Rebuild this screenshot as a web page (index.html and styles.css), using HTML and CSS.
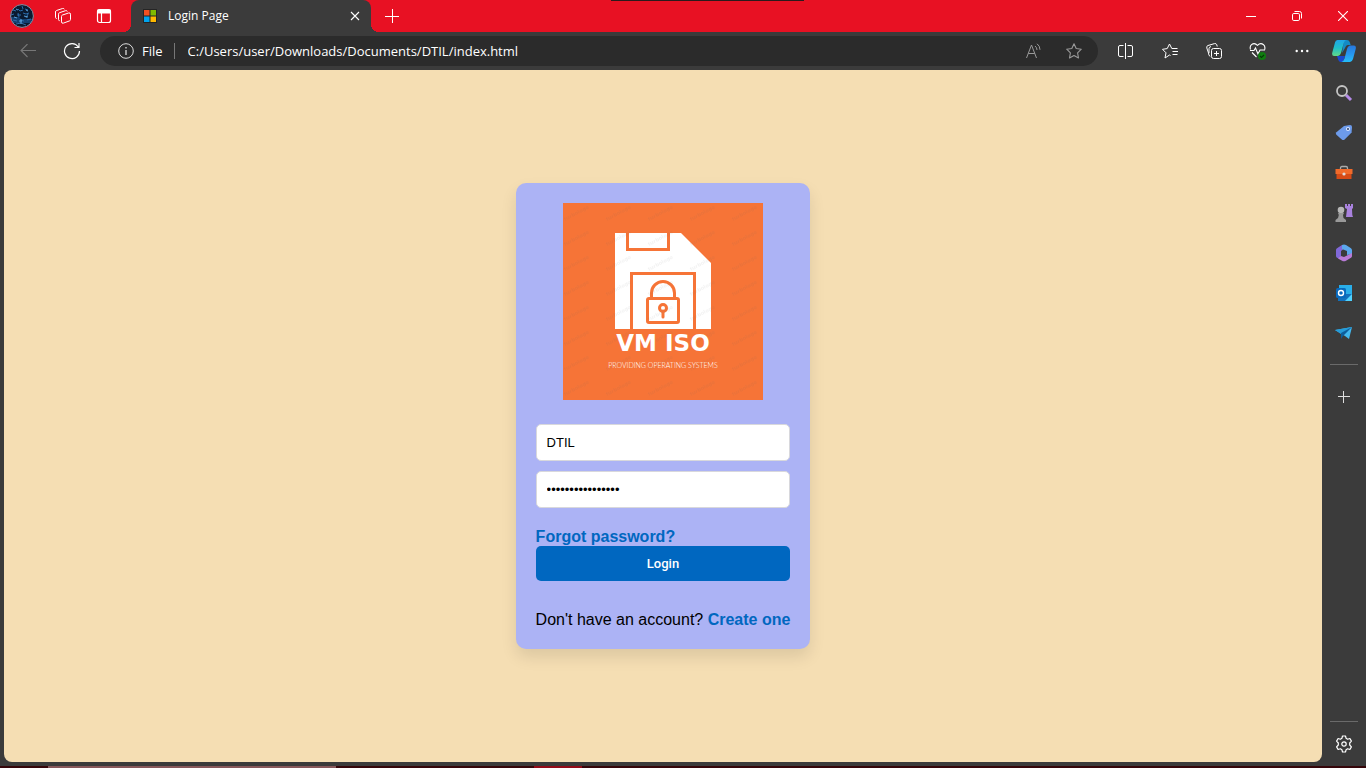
FILE: index.html
```html
<!DOCTYPE html>
<html lang="en">
<head>
<meta charset="utf-8">
<meta name="viewport" content="width=device-width, initial-scale=1">
<title>Login Page</title>
<link rel="stylesheet" href="styles.css">
</head>
<body>
<header class="titlebar">
  <div class="peek"></div>
  <button class="tool" aria-label="Profile">
    <svg width="24" height="24" viewBox="0 0 24 24">
      <defs><clipPath id="face"><circle cx="12" cy="12" r="11.5"/></clipPath></defs>
      <g clip-path="url(#face)">
        <path fill="#0a1a30" d="M0 0h24v24H0z"/>
        <path fill="#123f70" d="M0 13h9l2 2h13v4H0z"/>
        <path d="M3 6l3 1M8 5l2 2 3-1M15 5l3 1M1 11l3-1M7 11l4 0M13 9l3 1 3-1M3 16l4 1M10 16l4 1M17 16l4-1M6 20l5-1 5 2M12 2l1 3M18 10l-2 4M8 9l1 4" stroke="#2b6cab" fill="none"/>
        <path d="M11 15v5M9 17h3M14 12l4 1M4 13l3 1M16 6l2 1M6 5l2 1" stroke="#5ba2d8" fill="none"/>
      </g>
      <circle cx="12" cy="12" r="11.4" fill="none" stroke="#8f8fa3" stroke-width="1"/>
    </svg>
  </button>
  <button class="tool" aria-label="Workspaces">
    <svg width="18" height="18" viewBox="0 0 18 18" fill="none" stroke="#fff" stroke-linejoin="round">
      <path d="M8.500 8 14.500 6q2-.6 2 1.200v5.300q0 1-1 1.400l-6 2.200q-2 .6-2-1.200V9.500q0-1.200 1-1.500z"/>
      <path d="M5.700 13.700q-1.200 0-1.200-1.200V7.200q0-1.200 1-1.500l6-2q1.500-.4 1.800.8M2.700 11.500q-1.200 0-1.200-1.200V5q0-1.200 1-1.500l6-2q1.500-.4 1.800.8"/>
    </svg>
  </button>
  <button class="tool" aria-label="Tab actions">
    <svg width="16" height="16" viewBox="0 0 16 16" fill="none" stroke="#fff" stroke-width="1.200">
      <rect x="1.500" y="1.500" width="13" height="13" rx="2"/><path d="M2 2h12v3H2z" fill="#fff"/><path d="M5.500 5v9"/>
    </svg>
  </button>
  <div class="tab">
    <svg width="14" height="14" viewBox="0 0 14 14"><path fill="#252525" d="M0 0h14v14H0z"/><path fill="#f25022" d="M1 1h5.500v5.500H1z"/><path fill="#7fba00" d="M7.500 1H13v5.500H7.500z"/><path fill="#00a4ef" d="M1 7.500h5.500V13H1z"/><path fill="#ffb900" d="M7.500 7.500H13V13H7.500z"/></svg>
    <span class="tab-title">Login Page</span>
    <button class="tab-close" aria-label="Close tab"><svg width="10" height="10" viewBox="0 0 10 10" stroke="#fff" stroke-width="1.100"><path d="M1 1l8 8M9 1 1 9"/></svg></button>
  </div>
  <button class="tool" aria-label="New tab"><svg width="14" height="14" viewBox="0 0 14 14" stroke="#fff"><path d="M7.500 0v14M0 7.500h14"/></svg></button>
  <div class="window-buttons">
    <button aria-label="Minimize"><svg width="10" height="10" viewBox="0 0 10 10" stroke="#fff"><path d="M0 5.500h10"/></svg></button>
    <button aria-label="Restore"><svg width="10" height="10" viewBox="0 0 10 10" fill="none" stroke="#fff"><rect x=".5" y="2.500" width="7" height="7" rx="1.300"/><path d="M2.500.5h5q2 0 2 2v5"/></svg></button>
    <button aria-label="Close"><svg width="10" height="10" viewBox="0 0 10 10" stroke="#fff" stroke-width="1.100"><path d="M0 0l10 10M10 0 0 10"/></svg></button>
  </div>
</header>

<nav class="toolbar">
  <button class="tool" aria-label="Back" disabled><svg width="16" height="14" viewBox="0 0 16 14" fill="none" stroke="#777" stroke-width="1.100"><path d="M16 6.500H1M7.500 0 1 6.500 7.500 13"/></svg></button>
  <button class="tool" aria-label="Refresh"><svg width="18" height="18" viewBox="0 0 18 18" fill="none" stroke="#fff" stroke-width="1.200"><path d="M15.300 5A7.500 7.500 0 1 0 16.500 9M16 1v4.500h-4.500"/></svg></button>
  <div class="address">
    <button class="site-info"><svg width="16" height="16" viewBox="0 0 16 16" fill="none" stroke="#ddd"><circle cx="8" cy="8" r="7.300"/><path d="M8 7v5M8 4v1.500" stroke-width="1.300"/></svg>File</button>
    <input class="url" type="text" aria-label="Address" value="C:/Users/user/Downloads/Documents/DTIL/index.html">
    <button class="address-tool" aria-label="Read aloud"><svg width="16" height="16" viewBox="0 0 16 16" fill="none" stroke="#999"><path d="M.5 15 5.500 2l5 13M2.300 10.500h6.500M9 3q2 1.500 2 4M11 .8q3 2 3 6"/></svg></button>
    <button class="address-tool" aria-label="Add to favorites"><svg width="16" height="16" viewBox="0 0 16 16" fill="none" stroke="#999" stroke-width="1.100" stroke-linejoin="round"><path d="M8 .8 10.200 5.500l5.100.7-3.700 3.600.9 5.200L8 12.500 3.500 15l.9-5.200L.7 6.200l5.100-.7z"/></svg></button>
  </div>
  <div class="toolset">
    <button class="tool" aria-label="Split screen"><svg width="16" height="16" viewBox="0 0 16 16" fill="none" stroke="#fff"><path d="M7.500 0v16M5.500 2.500H2q-1.500 0-1.500 1.500v8q0 1.500 1.500 1.500h3.500M9.500 2.500H13q1.500 0 1.500 1.500v8q0 1.500-1.500 1.500H9.500"/></svg></button>
    <button class="tool" aria-label="Favorites"><svg width="16" height="16" viewBox="0 0 16 16" fill="none" stroke="#fff" stroke-linejoin="round"><path d="M8.500 12.500 7.500 12 3 15l1-5.200L.5 6.300l4.700-.7L7.500 1l2.300 4.500H15.500M10.500 8.500h5.500M10.500 11.500h5"/></svg></button>
    <button class="tool" aria-label="Collections"><svg width="16" height="16" viewBox="0 0 16 16" fill="none" stroke="#fff"><rect x="5.500" y="5.500" width="10" height="10" rx="2"/><path d="M10.500 8v5M8 10.500h5M4 13.500Q2.500 12 2.500 10L.8 5Q.3 3 2 2.500L8.500.6q1.700-.4 2.300 1.200l.4 1.700M5 3.500q-2 .5-2 2V10"/></svg></button>
    <button class="tool" aria-label="Browser essentials"><svg width="18" height="18" viewBox="0 0 18 18" fill="none" stroke="#fff" stroke-width="1.100"><path d="M1.500 7.500Q.5 4.500 2.500 2.700q3-2.500 6 .6 3-3 6-.6 2 1.800 1.200 4.800M1 8.500h4L6.500 6l2.500 6 2-4h5M3 10.500l4.500 4.500"/><circle cx="13" cy="14" r="4" fill="#107c10" stroke="none"/><path d="m11 14 1.500 1.500L15 13" stroke="#053a05"/></svg></button>
    <button class="tool" aria-label="Settings and more"><svg width="14" height="14" viewBox="0 0 14 14" fill="#fff"><circle cx="1.700" cy="7" r="1.200"/><circle cx="7" cy="7" r="1.200"/><circle cx="12.300" cy="7" r="1.200"/></svg></button>
  </div>
  <button class="copilot" aria-label="Copilot">
    <svg width="24" height="24" viewBox="0 0 24 24">
      <defs>
        <linearGradient id="cp1" x2="0" y2="1"><stop stop-color="#20a5e8"/><stop offset=".5" stop-color="#20bfc9"/><stop offset="1" stop-color="#62d987"/></linearGradient>
        <linearGradient id="cp2" x2="0" y2="1"><stop stop-color="#2777dc"/><stop offset=".5" stop-color="#2795ee"/><stop offset="1" stop-color="#25bdf8"/></linearGradient>
      </defs>
      <path fill="#148ac6" d="M12 1h3q2 0 2.700 2l1 3h-3Q14 6 13 9l-3 5z"/>
      <path fill="#1a49d0" d="M5 17h8l-2 6H9q-2 0-2.700-2z"/>
      <path fill="url(#cp1)" d="M5.500 1H14q-1.500.5-2.200 3L9 14q-1 3-3 3H2q-2.500 0-1.700-3.500L3 3.500Q3.500 1 5.500 1z"/>
      <path fill="url(#cp2)" d="M18.500 6.500H22q2.500 0 1.700 3.500L21 20q-1 3-3 3H9.500q2-.5 3-3.500L15 10q1-3.500 3.500-3.500z"/>
    </svg>
  </button>
</nav>

<div class="workspace">
  <main class="page">
    <form class="card">
      <svg class="logo" width="200" height="197" viewBox="0 0 200 197" role="img" aria-label="VM ISO">
        <defs>
          <pattern id="marks" width="42" height="25" patternUnits="userSpaceOnUse">
            <text class="mark" x="2" y="18" transform="rotate(-28 2 18)">turbologo</text>
          </pattern>
        </defs>
        <path fill="#f67437" d="M0 0h200v197H0z"/>
        <path fill="#fff" d="M52 30h66l30 30v66H52z"/>
        <g fill="none" stroke="#f67437" stroke-width="3">
          <path d="M64.500 30v16.500h41V30M68.500 126V70.500h63V126"/>
          <rect x="84.500" y="95.500" width="31" height="24" rx="1.500"/>
          <path d="M88.500 95V90a11.500 11.500 0 0 1 23 0v5"/>
          <circle cx="100" cy="105" r="3.500"/><path d="M100 108v6" stroke-linecap="round"/>
        </g>
        <path fill="url(#marks)" d="M0 0h200v197H0z"/>
        <text class="logo-name" x="100" y="148">VM ISO</text>
        <text class="logo-tagline" x="100" y="165">PROVIDING OPERATING SYSTEMS</text>
      </svg>
      <div class="fields">
        <input class="field" type="text" aria-label="Username" value="DTIL">
        <input class="field" type="password" aria-label="Password" value="abcdefghijklmnop">
      </div>
      <a class="link" href="#">Forgot password?</a>
      <button class="login" type="button">Login</button>
      <p class="signup">Don't have an account? <a class="link" href="#">Create one</a></p>
    </form>
  </main>
  <aside class="sidebar">
    <button aria-label="Search"><svg width="18" height="18" viewBox="0 0 18 18" fill="none"><path d="m11 11 5 5" stroke="#b58be8" stroke-width="3"/><circle cx="7" cy="7" r="5" stroke="#c4c4c4" stroke-width="1.800"/></svg></button>
    <button aria-label="Shopping"><svg width="18" height="18" viewBox="0 0 18 18"><path fill="#6d9bea" d="m9 2 6-1q2 0 2 2l-.4 5.500-7 7q-1.400 1.200-2.800 0L1.400 10.800Q.2 9.500 1.400 8.200z"/><circle cx="13" cy="5" r="2" fill="#dde8ff"/><circle cx="13" cy="5" r="1" fill="#293f66"/></svg></button>
    <button aria-label="Tools"><svg width="18" height="18" viewBox="0 0 18 18"><path d="M5.500 6V4q0-1.500 1.500-1.500h4q1.500 0 1.500 1.500v2" fill="none" stroke="#aaa" stroke-width="1.300"/><path fill="#f06a2a" d="M.5 5h17v5H.5z"/><path fill="#d64b16" d="M1.500 10h15v5h-15z"/><circle cx="9" cy="10" r="1.600" fill="#ddd"/></svg></button>
    <button aria-label="Games"><svg width="20" height="20" viewBox="0 0 20 20"><path fill="#a982de" d="M11 1h2v2h1V1h2v2h1V1h2v4l-1 1 .3 6 .7 2h-7l1-8-2-1z"/><circle cx="7" cy="7" r="3.300" fill="#b7b7b7"/><path fill="#999" d="M4 10h6l-1 2 .5 3 2.500 2v2H1.500v-2L4 15l.8-3z"/></svg></button>
    <button aria-label="Microsoft 365"><svg width="18" height="18" viewBox="0 0 18 18"><path fill="#8068d8" d="M7 1 2 4.200Q1 5 1 6v6q0 1 1 1.700l3 1.300 1-3V7l4-3z"/><path fill="#5ba7ed" d="m7 1q2-1 4 0l5 3.200q1 .8 1 2V10L12 11V7L7 5z"/><path fill="#b97bd7" d="M17 9v3q0 1-1 1.700l-5 3.100q-2 1-4 0l-4-2.300 3-2.500 3 1z"/></svg></button>
    <button aria-label="Outlook"><svg width="18" height="18" viewBox="0 0 18 18"><path fill="#29aee9" d="M4 1h13v9H4z"/><path fill="#1270bb" d="M3 10h14v7H3z"/><path fill="#4ed2ff" d="m17 10-7 7h7z"/><rect x="1" y="4" width="10" height="10" rx="1.500" fill="#0869bd"/><circle cx="6" cy="9" r="2.500" fill="none" stroke="#fff" stroke-width="1.400"/></svg></button>
    <button aria-label="Drop"><svg width="18" height="18" viewBox="0 0 18 18"><path fill="#42b8ee" d="M0 6 17 3l-3 12-4-3z"/><path fill="#259bd8" d="M0 6l17-3-11 7z"/><path fill="#0d5e9c" d="m6 9 11-6-9 9-2 3z"/></svg></button>
    <hr>
    <button aria-label="Customize"><svg width="12" height="12" viewBox="0 0 12 12" stroke="#ddd"><path d="M5.500 0v12M0 5.500h12"/></svg></button>
    <hr class="push">
    <button aria-label="Settings"><svg width="18" height="18" viewBox="0 0 18 18" fill="none" stroke="#fff" stroke-width="1.200" stroke-linejoin="round"><path d="M7.500 1h3l.6 2.300 1.500.9 2.300-.7 1.500 2.600L14.700 8v2l1.700 1.900-1.500 2.600-2.300-.7-1.500.9-.6 2.300h-3l-.6-2.300-1.500-.9-2.300.7-1.500-2.600L3.300 10V8L1.600 6.100l1.500-2.600 2.300.7 1.500-.9z"/><circle cx="9" cy="9" r="2.200"/></svg></button>
  </aside>
</div>
<footer class="taskbar"><span class="task-open"></span><span class="task-alert"></span></footer>
</body>
</html>
```
FILE: styles.css
```css
* { box-sizing: border-box; }

body {
  margin: 0;
  min-height: 100vh;
  display: flex;
  flex-direction: column;
  background: #3b3b3b;
  color: #fff;
  font-family: "Open Sans", "Noto Sans", sans-serif;
}

button {
  display: flex;
  align-items: center;
  justify-content: center;
  padding: 0;
  border: 0;
  background: none;
  color: inherit;
  font-family: inherit;
}

svg { display: block; flex: none; }

.titlebar {
  position: relative;
  display: flex;
  height: 32px;
  padding-left: 2px;
  background: #e81123;
}

.peek {
  position: absolute;
  top: 0;
  left: 611px;
  width: 193px;
  height: 1px;
  background: #2b1a1c;
}

.tool { width: 40px; flex: none; }
.titlebar .tool + .tool { margin-left: 1px; }

.tab {
  position: relative;
  display: flex;
  align-items: center;
  gap: 11px;
  width: 240px;
  margin-left: 7px;
  padding: 0 10px 0 12px;
  border-radius: 8px 8px 0 0;
  background: #3b3b3b;
}

.tab + .tool { width: 42px; }

.tab::before,
.tab::after {
  content: "";
  position: absolute;
  bottom: 0;
  width: 8px;
  height: 8px;
}

.tab::before {
  right: 100%;
  background: radial-gradient(circle at 0 0, #e81123 8px, #3b3b3b 8px);
}

.tab::after {
  left: 100%;
  background: radial-gradient(circle at 100% 0, #e81123 8px, #3b3b3b 8px);
}

.tab-title { flex: 1; font-size: 12px; line-height: 16px; }
.tab-close { width: 12px; }

.window-buttons { display: flex; margin-left: auto; }
.window-buttons button { width: 46px; }

.toolbar {
  display: flex;
  height: 38px;
  padding-left: 6px;
}

.toolbar .tool { width: 44px; }

.address {
  flex: 1;
  display: flex;
  align-items: center;
  height: 30px;
  margin: 4px 6px;
  padding: 0 4px 0 18px;
  border-radius: 15px;
  background: #2b2b2b;
}

.site-info {
  gap: 8px;
  height: 16px;
  padding-right: 11px;
  border-right: 1px solid #777;
  font-size: 13px;
}

.url {
  flex: 1;
  min-width: 0;
  padding: 0 13px;
  border: 0;
  outline: 0;
  background: none;
  color: #fff;
  font-family: inherit;
  font-size: 13px;
}

.address-tool { width: 40px; height: 30px; }
.toolset { display: flex; }
.copilot { width: 42px; padding-right: 2px; }

.workspace { flex: 1; display: flex; }

.page {
  flex: 1;
  display: flex;
  align-items: center;
  justify-content: center;
  margin: 0 0 4px 4px;
  border-radius: 8px;
  background: #f5deb3;
}

.card {
  display: flex;
  flex-direction: column;
  padding: 20px;
  border-radius: 10px;
  background: #acb3f5;
  box-shadow: 0 8px 16px rgba(0, 0, 0, 0.1);
  color: #000;
  font-family: "Liberation Sans", Arial, sans-serif;
  font-size: 16px;
  line-height: 18px;
}

.logo { align-self: center; }

.mark {
  font: 700 5px "DejaVu Sans", sans-serif;
  fill: #555;
  fill-opacity: 0.08;
}

.logo-name {
  font: 700 23px "DejaVu Sans", sans-serif;
  fill: #fff;
  text-anchor: middle;
}

.logo-tagline {
  font: 300 7px Lato, sans-serif;
  fill: #fff;
  text-anchor: middle;
}

.fields {
  display: flex;
  flex-direction: column;
  gap: 10px;
  margin: 24px 0 20px;
}

.field {
  width: 100%;
  height: 37px;
  padding: 10px;
  border: 1px solid #d8d8dc;
  border-radius: 5px;
  background: #fff;
  color: #000;
  font-family: inherit;
  font-size: 13px;
}

.link {
  color: #0067c0;
  font-weight: 700;
  text-decoration: none;
}

.login {
  height: 35px;
  border-radius: 5px;
  background: #0067c0;
  color: #fff;
  font: 500 13px Roboto, sans-serif;
}

.signup { margin: 30px 0 0; white-space: nowrap; }

.sidebar {
  display: flex;
  flex-direction: column;
  align-items: center;
  width: 44px;
  padding: 3px 0 2px;
}

.sidebar button { width: 44px; height: 40px; }

.sidebar hr {
  width: 28px;
  margin: 11px 0 12px;
  border: 0;
  border-top: 1px solid #6a6a6a;
}

.sidebar .push { margin: auto 0 2px; }

.taskbar {
  display: flex;
  gap: 198px;
  height: 2px;
  padding-left: 48px;
  background: #35060a;
}

.task-open { width: 288px; background: #87585b; }
.task-alert { width: 48px; background: #930b19; }
```
